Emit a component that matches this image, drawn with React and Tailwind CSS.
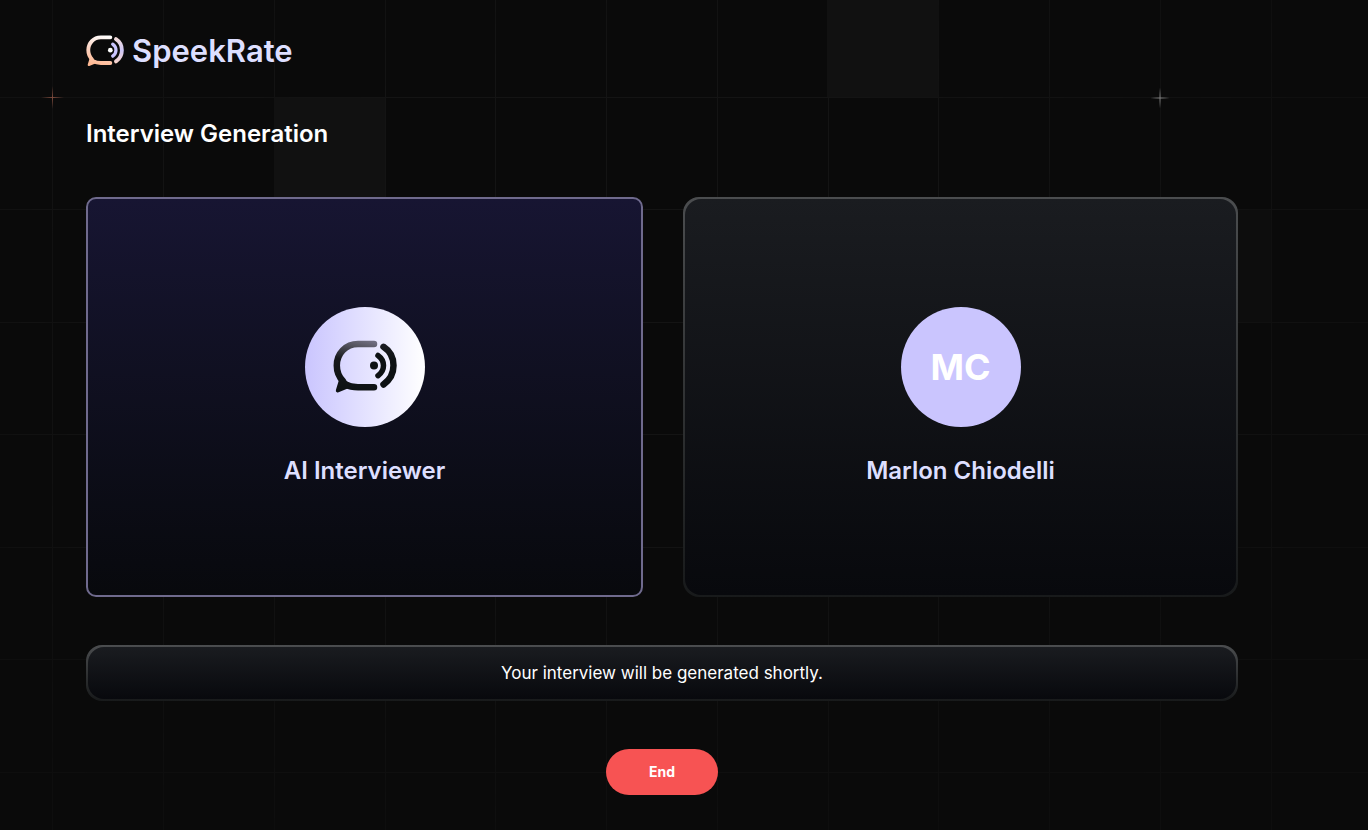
const COLUMNS = [52, 163, 274, 385, 495, 606, 717, 828, 938, 1049, 1160, 1271];
const ROWS = [97, 209, 322, 434, 547, 659, 772];

function Backdrop() {
  return (
    <svg className="absolute inset-0 h-full w-full" viewBox="0 0 1368 830" preserveAspectRatio="none" aria-hidden="true">
      <defs>
        <radialGradient id="fade" cx="0.45" cy="0.35" r="0.7">
          <stop offset="0.4" stopColor="#fff" />
          <stop offset="1" stopColor="#fff" stopOpacity="0.4" />
        </radialGradient>
        <mask id="grid-mask" maskUnits="userSpaceOnUse" x="0" y="0" width="1368" height="830">
          <rect width="1368" height="830" fill="url(#fade)" />
        </mask>
        <radialGradient id="spark-warm">
          <stop stopColor="#7d4a3c" />
          <stop offset="1" stopColor="#7d4a3c" stopOpacity="0" />
        </radialGradient>
        <radialGradient id="spark-cool">
          <stop stopColor="#8a8a8a" />
          <stop offset="1" stopColor="#707070" stopOpacity="0" />
        </radialGradient>
      </defs>
      <g mask="url(#grid-mask)">
        {COLUMNS.map((x) => (
          <rect key={x} x={x} y="0" width="1" height="830" fill="#141414" />
        ))}
        {ROWS.map((y) => (
          <rect key={y} x="0" y={y} width="1368" height="1" fill="#141414" />
        ))}
      </g>
      <rect x="827" y="0" width="111" height="97" fill="#111111" />
      <rect x="274" y="98" width="111" height="112" fill="#111111" />
      <rect x="1160" y="210" width="111" height="112" fill="#0d0d0d" />
      <rect x="41" y="97" width="23" height="1" fill="url(#spark-warm)" />
      <rect x="52" y="86" width="1" height="23" fill="url(#spark-warm)" />
      <rect x="1149" y="97" width="22" height="2" fill="url(#spark-cool)" />
      <rect x="1159" y="86" width="2" height="24" fill="url(#spark-cool)" />
    </svg>
  );
}

function LogoMark({ id, bubble, outerWave, innerWave, dot, className }) {
  return (
    <svg viewBox="0 0 64 54" className={className} fill="none" strokeLinecap="round" strokeLinejoin="round" aria-hidden="true">
      <defs>
        <linearGradient id={`${id}-bubble`} gradientUnits="userSpaceOnUse" x1="32" y1="0" x2="20" y2="52">
          {bubble.map(([offset, color]) => (
            <stop key={offset} offset={offset} stopColor={color} />
          ))}
        </linearGradient>
        <linearGradient id={`${id}-wave`} gradientUnits="userSpaceOnUse" x1="56" y1="4" x2="56" y2="48">
          {outerWave.map(([offset, color]) => (
            <stop key={offset} offset={offset} stopColor={color} />
          ))}
        </linearGradient>
      </defs>
      <path
        d="M41 4H25C12.800 4 3.800 13.500 3.800 25.500C3.800 31.500 6 37 10 41M12 44.500C16 46.400 20 47.200 25 47.200H41"
        stroke={`url(#${id}-bubble)`}
        strokeWidth="6.500"
      />
      <path d="M8 40L4.800 50.500L17 45.500Z" fill={`url(#${id}-bubble)`} stroke={`url(#${id}-bubble)`} strokeWidth="4" />
      <path d="M50.500 6.800C57 11 60.500 18 60.500 25.600C60.500 33.200 57 40 50.500 44.500" stroke={`url(#${id}-wave)`} strokeWidth="6.500" />
      <path d="M45 15.500C48.500 18 50.500 21.500 50.500 25.600C50.500 29.700 48.500 33.200 45 35.700" stroke={innerWave} strokeWidth="5.500" />
      <circle cx="41" cy="25.600" r="4" fill={dot} />
    </svg>
  );
}

export default function App() {
  return (
    <div className="relative min-h-screen bg-[#0a0a0a] font-['Inter','Liberation_Sans',sans-serif] text-white">
      <Backdrop />
      <div className="relative flex flex-col pr-[130px] pl-[86px] pt-8">
        <header>
          <a href="#" className="flex w-fit items-center gap-2">
            <LogoMark
              id="brand"
              bubble={[[0, "#ffffff"], [0.5, "#fbd5c4"], [1, "#ffb892"]]}
              outerWave={[[0, "#f5dcd8"], [0.5, "#cdc6f5"], [1, "#fbd5c8"]]}
              innerWave="#cac5fe"
              dot="#ffffff"
              className="h-8 w-[38px]"
            />
            <span className="text-[31px] leading-[38px] font-semibold text-[#dddfff]">SpeekRate</span>
          </a>
        </header>

        <main className="mt-12 flex flex-col">
          <h1 className="text-2xl leading-8 font-semibold">Interview Generation</h1>

          <div className="mt-[47px] grid grid-cols-[557fr_555fr] gap-10">
            <section className="flex h-[400px] flex-col items-center justify-center gap-7 rounded-[10px] border-2 border-[#6f6a8d] bg-linear-to-b from-[#171532] to-[#08090d]">
              <div className="flex size-[120px] items-center justify-center rounded-full bg-linear-to-r from-[#cac5fe] to-white">
                <LogoMark
                  id="avatar"
                  bubble={[[0, "#706e80"], [0.15, "#55545f"], [0.45, "#17191c"], [1, "#0d1113"]]}
                  outerWave={[[0, "#1b1c22"], [0.4, "#0d1113"], [1, "#0d1113"]]}
                  innerWave="#0d1113"
                  dot="#0d1113"
                  className="h-[54px] w-16"
                />
              </div>
              <h2 className="text-2xl leading-8 font-semibold text-[#dddfff]">AI Interviewer</h2>
            </section>

            <div className="h-[400px] rounded-2xl bg-linear-to-b from-[#4b4d4f] to-[#181a1b] p-[2px]">
              <section className="flex h-full flex-col items-center justify-center gap-7 rounded-2xl bg-linear-to-b from-[#1a1c20] to-[#08090d]">
                <div className="flex size-[120px] items-center justify-center rounded-full bg-[#cac5fe]">
                  <span className="text-4xl font-bold">MC</span>
                </div>
                <h2 className="text-2xl leading-8 font-semibold text-[#dddfff]">Marlon Chiodelli</h2>
              </section>
            </div>
          </div>

          <div className="mt-12 rounded-2xl bg-linear-to-b from-[#4b4d4f] to-[#181a1b] p-[2px]">
            <p className="rounded-2xl bg-linear-to-b from-[#1a1c20] to-[#08090d] px-5 py-3 text-center text-[17px] leading-7">
              Your interview will be generated shortly.
            </p>
          </div>

          <button type="button" className="mt-12 h-[46px] w-28 self-center rounded-full bg-[#f75353] text-sm font-bold">
            End
          </button>
        </main>
      </div>
    </div>
  );
}
